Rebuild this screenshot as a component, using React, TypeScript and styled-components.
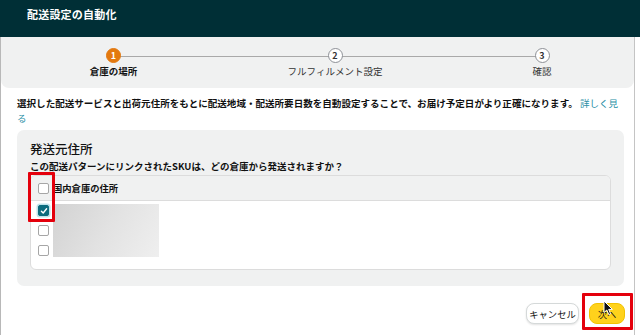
import styled, { createGlobalStyle } from "styled-components";

const GlobalStyle = createGlobalStyle`
  html, body {
    margin: 0;
    padding: 0;
    background: #fff;
  }
  * {
    box-sizing: border-box;
  }
`;

const FONT = `"Noto Sans CJK JP", "Noto Sans", "Liberation Sans", sans-serif`;

const steps = [
  { num: 1, label: "倉庫の場所", active: true },
  { num: 2, label: "フルフィルメント設定", active: false },
  { num: 3, label: "確認", active: false },
];

const rows = [true, false, false];

const App = () => {
  return (
    <Root>
      <GlobalStyle />
      <Header>
        <Title>配送設定の自動化</Title>
      </Header>
      <Body>
        <Stepper>
          {steps.map(step => (
            <Step key={step.num}>
              <Circle $active={step.active}>{step.num}</Circle>
              <StepLabel $active={step.active}>{step.label}</StepLabel>
            </Step>
          ))}
        </Stepper>
        <Description>
          選択した配送サービスと出荷元住所をもとに配送地域・配送所要日数を自動設定することで、お届け予定日がより正確になります。{" "}
          <Link>詳しく見る</Link>
        </Description>
        <Panel>
          <PanelTitle>発送元住所</PanelTitle>
          <PanelQuestion>
            この配送パターンにリンクされたSKUは、どの倉庫から発送されますか？
          </PanelQuestion>
          <Table>
            <TableHead>
              <Checkbox />
              <HeadText>国内倉庫の住所</HeadText>
            </TableHead>
            <TableBody>
              <CheckColumn>
                {rows.map((checked, i) => (
                  <Checkbox key={i} $checked={checked}>
                    {checked && (
                      <svg width="8" height="8" viewBox="0 0 8 8">
                        <path
                          d="M1.4 4.2 L3.2 6 L6.6 1.8"
                          fill="none"
                          stroke="#fff"
                          strokeWidth="1.4"
                          strokeLinecap="round"
                          strokeLinejoin="round"
                        />
                      </svg>
                    )}
                  </Checkbox>
                ))}
              </CheckColumn>
              <BlurredCell />
            </TableBody>
          </Table>
        </Panel>
        <Footer>
          <CancelButton>キャンセル</CancelButton>
          <NextButton>次へ</NextButton>
        </Footer>
      </Body>
      <Highlight $left={28} $top={172} $width={27} $height={50} />
      <Highlight $left={582} $top={293} $width={51} $height={37} />
      <Cursor width="11" height="16" viewBox="0 0 11 16">
        <path
          d="M1 1 L1 12.5 L3.8 10 L5.8 14.6 L7.6 13.8 L5.7 9.4 L9.4 9.4 Z"
          fill="#111"
          stroke="#fff"
          strokeWidth="1"
          strokeLinejoin="round"
        />
      </Cursor>
    </Root>
  );
};

const Root = styled.div`
  position: relative;
  width: 640px;
  height: 335px;
  overflow: hidden;
  font-family: ${FONT};
  color: #0f1111;
  background: #fff;
`;

const Header = styled.header`
  height: 37px;
  background: #002f36;
  display: flex;
  align-items: center;
  padding: 0 0 10px 27px;
`;

const Title = styled.h1`
  margin: 0;
  font-size: 11px;
  font-weight: 700;
  color: #fff;
  letter-spacing: 0.2px;
`;

const Body = styled.main`
  width: 635px;
  height: 298px;
  border-left: 1px solid #b8b8b8;
  border-right: 1px solid #c4c4c4;
  display: flex;
  flex-direction: column;
`;

const Stepper = styled.section`
  position: relative;
  height: 51px;
  background: #f0f1f1;
  border-radius: 0 0 8px 8px;
  padding-top: 11px;
  display: grid;
  grid-template-columns: 225px 218px 1fr;
  &::before {
    content: "";
    position: absolute;
    left: 112px;
    width: 429px;
    top: 18.5px;
    height: 1px;
    background: #a9a9a9;
  }
`;

const Step = styled.div`
  position: relative;
  display: flex;
  flex-direction: column;
  align-items: center;
  &:last-child {
    margin-right: -6px;
  }
`;

const Circle = styled.div<{ $active: boolean }>`
  width: 15px;
  height: 15px;
  border-radius: 50%;
  display: flex;
  align-items: center;
  justify-content: center;
  font-size: 9px;
  font-weight: 700;
  background: ${p => (p.$active ? "#e3790f" : "#fff")};
  color: ${p => (p.$active ? "#fff" : "#333")};
  border: 1px solid ${p => (p.$active ? "#e3790f" : "#8d9096")};
`;

const StepLabel = styled.div<{ $active: boolean }>`
  margin-top: 2px;
  font-size: 9.5px;
  line-height: 13px;
  font-weight: ${p => (p.$active ? 700 : 400)};
  color: ${p => (p.$active ? "#111" : "#333")};
  white-space: nowrap;
`;

const Description = styled.p`
  margin: 8px 10px 0 16px;
  font-size: 9.55px;
  line-height: 15px;
  font-weight: 700;
  color: #111;
`;

const Link = styled.span`
  color: #2a8fa6;
  font-weight: 400;
`;

const Panel = styled.section`
  margin: 4px 10px 0 16px;
  padding: 10px 13px 16px 13px;
  background: #f0f1f1;
  border-radius: 7px;
`;

const PanelTitle = styled.h2`
  margin: 0;
  font-size: 12.5px;
  line-height: 18px;
  font-weight: 500;
  color: #111;
`;

const PanelQuestion = styled.p`
  margin: 1px 0 2px;
  font-size: 9.5px;
  line-height: 14px;
  font-weight: 700;
  color: #111;
`;

const Table = styled.div`
  border: 1px solid #dcdcdc;
  border-radius: 6px;
  overflow: hidden;
  background: #fff;
`;

const TableHead = styled.div`
  height: 25px;
  background: #f0f1f1;
  border-bottom: 1px solid #dcdcdc;
  display: flex;
  align-items: center;
  gap: 4px;
  padding-left: 7px;
`;

const HeadText = styled.span`
  font-size: 9.3px;
  font-weight: 700;
  color: #111;
`;

const TableBody = styled.div`
  height: 68px;
  display: flex;
  gap: 4px;
  padding: 3px 0 0 7px;
`;

const CheckColumn = styled.div`
  display: flex;
  flex-direction: column;
  gap: 9px;
  padding-top: 1px;
`;

const Checkbox = styled.span<{ $checked?: boolean }>`
  width: 11px;
  height: 11px;
  border-radius: 2px;
  display: flex;
  align-items: center;
  justify-content: center;
  background: ${p => (p.$checked ? "#0b6b7d" : "#fff")};
  border: 1px solid ${p => (p.$checked ? "#0b6b7d" : "#a6a6a6")};
  box-shadow: ${p => (p.$checked ? "0 0 0 1.5px #bfe3ea" : "none")};
`;

const BlurredCell = styled.div`
  width: 106px;
  height: 53px;
  background: linear-gradient(120deg, #d2d2d2 0%, #e2e2e2 50%, #efefef 100%);
`;

const Footer = styled.footer`
  display: flex;
  justify-content: flex-end;
  align-items: center;
  gap: 10px;
  margin-top: 17px;
  padding-right: 9px;
`;

const ButtonBase = styled.button`
  height: 21px;
  border-radius: 8px;
  font-family: ${FONT};
  font-size: 9.3px;
  color: #111;
  padding: 0;
  display: flex;
  align-items: center;
  justify-content: center;
`;

const CancelButton = styled(ButtonBase)`
  width: 53px;
  background: #fff;
  border: 1px solid #d5d9d9;
  box-shadow: 0 1px 2px rgba(15, 17, 17, 0.12);
`;

const NextButton = styled(ButtonBase)`
  width: 36px;
  background: #ffd21c;
  border: 1px solid #f2c200;
`;

const Highlight = styled.div<{
  $left: number;
  $top: number;
  $width: number;
  $height: number;
}>`
  position: absolute;
  left: ${p => p.$left}px;
  top: ${p => p.$top}px;
  width: ${p => p.$width}px;
  height: ${p => p.$height}px;
  border: 3px solid #e4000c;
  border-radius: 1px;
  pointer-events: none;
`;

const Cursor = styled.svg`
  position: absolute;
  left: 603px;
  top: 300px;
`;

export default App;
